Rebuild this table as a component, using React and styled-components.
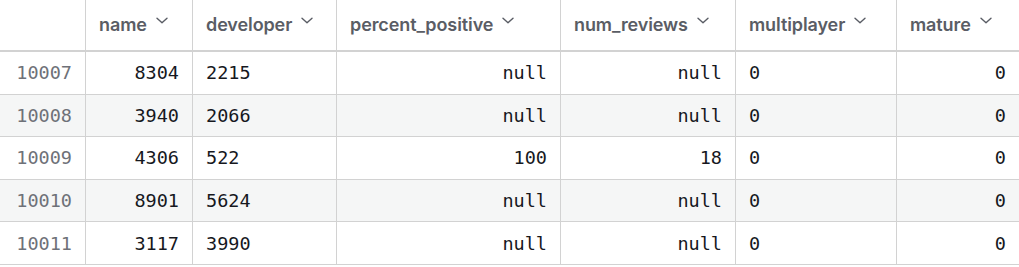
import React from "react";
import styled, { createGlobalStyle } from "styled-components";

const Global = createGlobalStyle`
  html, body { margin: 0; padding: 0; background: #ffffff; }
  body { font-family: Inter, "Noto Sans", sans-serif; }
`;

const COLS = "86px 107px 144px 224px 175px 161px 1fr";

const Table = styled.div`
  width: 1019px;
  display: grid;
  grid-template-columns: ${COLS};
  overflow: hidden;
`;

const HeadCell = styled.div`
  height: 52px;
  box-sizing: border-box;
  border-bottom: 2px solid #d2d2d2;
  border-right: ${(p) => (p.$last ? "none" : "1px solid #d2d2d2")};
  padding: 0 13px 1px;
  display: flex;
  align-items: center;
  gap: 9px;
  font-family: Inter, "Noto Sans", sans-serif;
  font-weight: 600;
  font-size: 18px;
  color: #5a5d65;
  letter-spacing: -0.1px;
  white-space: nowrap;
`;

const Chevron = styled.svg`
  width: 12px;
  height: 7px;
  transform: translateY(-4px);
  flex: none;
`;

const Cell = styled.div`
  height: 42.6px;
  box-sizing: border-box;
  border-bottom: 1px solid #d2d2d2;
  border-right: ${(p) => (p.$last ? "none" : "1px solid #d2d2d2")};
  background: ${(p) => (p.$alt ? "#f5f6f6" : "#ffffff")};
  padding: 0 13px;
  display: flex;
  align-items: center;
  justify-content: ${(p) => (p.$right ? "flex-end" : "flex-start")};
  font-family: "DejaVu Sans Mono", "Liberation Mono", monospace;
  font-size: 18.5px;
  color: ${(p) => (p.$index ? "#6e7178" : "#16181e")};
  white-space: nowrap;
`;

const headers = [
  "",
  "name",
  "developer",
  "percent_positive",
  "num_reviews",
  "multiplayer",
  "mature",
];

const align = [true, true, false, true, true, false, true];

const rows = [
  ["10007", "8304", "2215", "null", "null", "0", "0"],
  ["10008", "3940", "2066", "null", "null", "0", "0"],
  ["10009", "4306", "522", "100", "18", "0", "0"],
  ["10010", "8901", "5624", "null", "null", "0", "0"],
  ["10011", "3117", "3990", "null", "null", "0", "0"],
];

function ChevronIcon() {
  return (
    <Chevron viewBox="0 0 12 7" fill="none">
      <path
        d="M1 1.2 L6 5.8 L11 1.2"
        stroke="#5a5d65"
        strokeWidth="1.4"
        strokeLinecap="round"
        strokeLinejoin="round"
      />
    </Chevron>
  );
}

export default function App() {
  return (
    <>
      <Global />
      <Table>
        {headers.map((h, i) => (
          <HeadCell key={"h" + i} $last={i === headers.length - 1}>
            {h && (
              <>
                <span>{h}</span>
                <ChevronIcon />
              </>
            )}
          </HeadCell>
        ))}
        {rows.map((r, ri) =>
          r.map((v, ci) => (
            <Cell
              key={ri + "-" + ci}
              $alt={ri % 2 === 1}
              $right={align[ci]}
              $index={ci === 0}
              $last={ci === r.length - 1}
            >
              {v}
            </Cell>
          ))
        )}
      </Table>
    </>
  );
}
